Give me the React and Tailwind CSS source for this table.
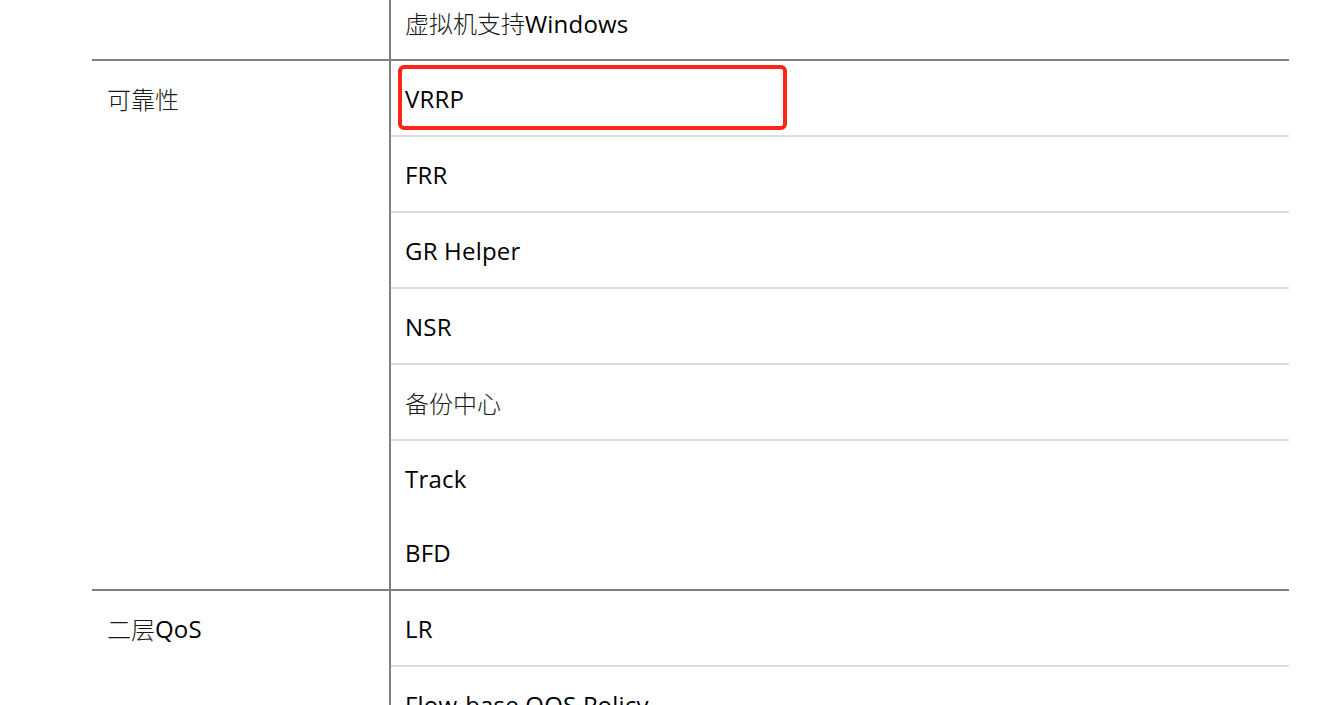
import React from "react";

const latin = "font-['Open_Sans','Noto_Sans_CJK_SC',sans-serif]";

const Zh = ({ children }) => (
    <span className="font-['Noto_Sans_CJK_SC',sans-serif] font-light text-[#1a1a1a] text-[24px] tracking-normal">{children}</span>
);

const Cell = ({ children, last, box }) => (
    <div className={`relative box-content h-[74px] flex items-center pl-[14px] ${last ? "" : "border-b-2 border-[#dcdcdc]"}`}>
        {box ? <div className="absolute left-[7px] top-[4px] w-[389px] h-[65px] border-4 border-[#ff2418] rounded-[6px]"></div> : null}
        <span className="pt-[2px]">{children}</span>
    </div>
);

const Group = ({ label, children }) => (
    <div className="flex border-b-2 border-[#808080]">
        <div className="w-[299px] shrink-0 border-r-2 border-[#808080] pl-[15px]">
            <div className="h-[74px] flex items-center pt-[2px]">{label}</div>
        </div>
        <div className="flex-1 flex flex-col">{children}</div>
    </div>
);

const App = () => {
    return <div className={`w-[1334px] h-[705px] overflow-hidden bg-white text-black text-[24px] tracking-[0.2px] ${latin}`}>
        <div className="ml-[92px] w-[1197px] -mt-[15px]">
            <Group label={null}>
                <Cell last><Zh>虚拟机支持</Zh>Windows</Cell>
            </Group>
            <Group label={<Zh>可靠性</Zh>}>
                <Cell box>VRRP</Cell>
                <Cell>FRR</Cell>
                <Cell>GR Helper</Cell>
                <Cell>NSR</Cell>
                <Cell><Zh>备份中心</Zh></Cell>
                <Cell last>Track</Cell>
                <Cell last>BFD</Cell>
            </Group>
            <Group label={<><Zh>二层</Zh>QoS</>}>
                <Cell>LR</Cell>
                <Cell last>Flow-base QOS Policy</Cell>
            </Group>
        </div>
    </div>
}

export default App
